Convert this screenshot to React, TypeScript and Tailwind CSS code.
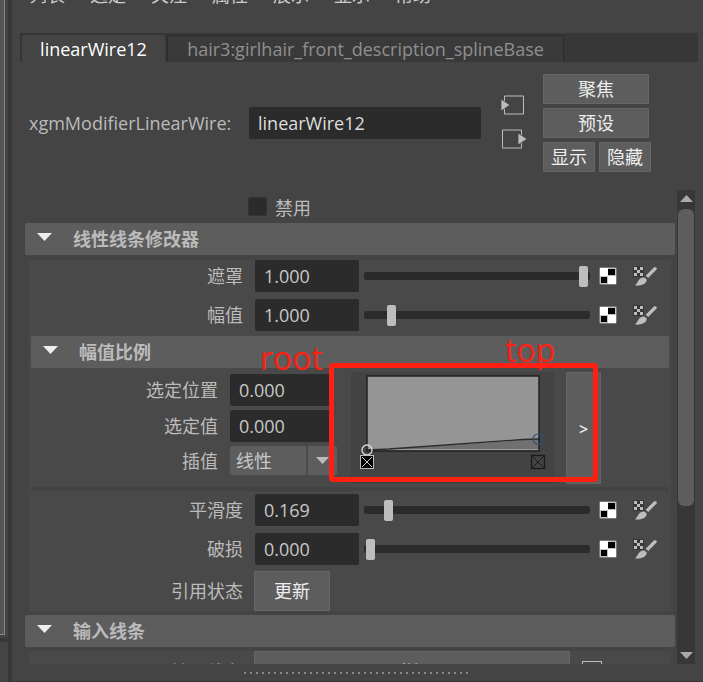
import React from "react";

function Triangle({ className }: { className: string }) {
  return (
    <svg viewBox="0 0 15 8" className={className} aria-hidden="true">
      <path d="M0 0H15L7.5 8Z" fill="currentColor" />
    </svg>
  );
}

function CheckerIcon() {
  return (
    <svg width="18" height="18" viewBox="0 0 18 18" aria-hidden="true">
      <rect width="18" height="18" rx="2" fill="#7d7d7d" />
      <rect x="1" y="1" width="16" height="16" rx="1" fill="#c4c4c4" />
      <path d="M1 1h8v8H1zM9 9h8v8H9z" fill="#fff" />
      <path d="M9 2h7v6H9zM2 10h6v6H2z" fill="#000" />
    </svg>
  );
}

function BrushIcon() {
  return (
    <svg width="25" height="20" viewBox="0 0 25 20" aria-hidden="true">
      <rect x="0" y="0" width="11" height="11" fill="#383838" />
      <path
        d="M1 1h3v3H1zM7 1h3v3H7zM4 4h3v3H4zM1 7h3v3H1zM7 7h3v3H7z"
        fill="#bdbdbd"
        shapeRendering="crispEdges"
      />
      <path
        d="M20.600 1.300C22.400 0 24.900 1.600 24 3.600L15.200 12.400 12.200 9.800ZM11.200 11L14.200 13.500C14.300 18.300 7 21.400 1 19.400 4.800 18 4.200 11.200 11.200 11Z"
        fill="#bdbdbd"
        stroke="#3a3a3a"
        strokeWidth="0.700"
      />
    </svg>
  );
}

function SectionHeader({ title }: { title: string }) {
  return (
    <button
      type="button"
      className="flex h-8 w-full items-center gap-[21px] rounded-xs bg-[#5d5d5d] pl-3 text-left font-bold text-[#bbbbbb]"
    >
      <Triangle className="mb-1 h-2 w-[15px] text-[#eeeeee]" />
      {title}
    </button>
  );
}

const fieldClass = "h-8 w-[104px] shrink-0 rounded-xs bg-[#2b2b2b] px-[9px] text-[#c8c8c8] outline-none";
const buttonClass =
  "flex items-center justify-center rounded-[1px] border border-[#666666] bg-[#5d5d5d] text-[#eeeeee]";

function SliderRow({ id, label, value, position }: { id: string; label: string; value: string; position: number }) {
  return (
    <div className="flex h-8 items-center pr-[13px]">
      <label htmlFor={id} className="w-[214px] shrink-0 text-right">
        {label}
      </label>
      <input id={id} defaultValue={value} className={"ml-3 " + fieldClass} />
      <input
        type="range"
        aria-label={label}
        min={0}
        max={217}
        defaultValue={position}
        className="ml-[5px] h-[21px] min-w-0 flex-1 appearance-none bg-transparent [&::-webkit-slider-runnable-track]:h-2 [&::-webkit-slider-runnable-track]:rounded-xs [&::-webkit-slider-runnable-track]:bg-[#2b2b2b] [&::-webkit-slider-thumb]:-mt-1.5 [&::-webkit-slider-thumb]:h-[21px] [&::-webkit-slider-thumb]:w-[9px] [&::-webkit-slider-thumb]:appearance-none [&::-webkit-slider-thumb]:rounded-xs [&::-webkit-slider-thumb]:bg-[#bdbdbd]"
      />
      <button type="button" aria-label="纹理" className="ml-[9px]">
        <CheckerIcon />
      </button>
      <button type="button" aria-label="绘制" className="ml-4">
        <BrushIcon />
      </button>
    </div>
  );
}

function Ramp() {
  return (
    <svg width="203" height="112" viewBox="0 0 203 112" className="bg-[#434343]" role="img" aria-label="幅值比例">
      <rect x="16" y="4" width="172" height="75" fill="#959595" />
      <path d="M16 78L38 77 188 67V79H16Z" fill="#707070" />
      <path d="M17 77.500H188" stroke="#999" />
      <path d="M16 78L38 77 172 67.500 188 67" stroke="#2c2c2c" strokeWidth="1.300" fill="none" />
      <rect x="16" y="4" width="172" height="75" fill="none" stroke="#222" strokeWidth="1.500" />
      <circle cx="16" cy="78" r="5" fill="none" stroke="#ddd" strokeWidth="1.300" />
      <circle cx="187" cy="67" r="5" fill="none" stroke="#2f4f70" strokeWidth="1.200" />
      <rect x="9.500" y="83.500" width="13" height="13" fill="#000" stroke="#bbb" />
      <path d="M11 85L21 95M21 85L11 95" stroke="#ccc" />
      <rect x="180.500" y="83.500" width="13" height="13" fill="none" stroke="#1a1a1a" strokeWidth="1.300" />
      <path d="M181 84L193 96M193 84L181 96" stroke="#1a1a1a" />
    </svg>
  );
}

function AttributeHeader() {
  return (
    <div className="flex h-[128px] shrink-0 items-start pt-3 pl-[17px]">
      <label htmlFor="node" className="mt-[33px] w-[220px] leading-8">
        xgmModifierLinearWire:
      </label>
      <input
        id="node"
        defaultValue="linearWire12"
        className="mt-[33px] h-8 w-[232px] rounded-xs bg-[#2b2b2b] px-[9px] text-[#dddddd] outline-none"
      />
      <div className="mt-[21px] ml-5 flex w-[26px] flex-col gap-3">
        <button type="button" aria-label="输入连接">
          <svg width="26" height="22" viewBox="0 0 26 22" aria-hidden="true">
            <path d="M3.500 1h19v18h-19z" fill="none" stroke="#bdbdbd" />
            <path d="M0 4v12l9-6z" fill="#bdbdbd" stroke="#444" strokeWidth="0.800" />
          </svg>
        </button>
        <button type="button" aria-label="输出连接">
          <svg width="26" height="22" viewBox="0 0 26 22" aria-hidden="true">
            <path d="M1.500 1h19v18h-19z" fill="none" stroke="#bdbdbd" />
            <path d="M17 4v12l9-6z" fill="#bdbdbd" stroke="#444" strokeWidth="0.800" />
          </svg>
        </button>
      </div>
      <div className="ml-4 flex w-[108px] flex-col gap-1">
        <button type="button" className={"h-[30px] w-[106px] " + buttonClass}>
          聚焦
        </button>
        <button type="button" className={"h-[30px] w-[106px] " + buttonClass}>
          预设
        </button>
        <div className="flex gap-1">
          <button type="button" className={"h-[30px] flex-1 " + buttonClass}>
            显示
          </button>
          <button type="button" className={"h-[30px] flex-1 " + buttonClass}>
            隐藏
          </button>
        </div>
      </div>
    </div>
  );
}

function ScaleSection() {
  return (
    <div className="relative mx-0.5 mt-[5px]">
      <SectionHeader title="幅值比例" />
      <div className="flex h-[119px] pt-1">
        <div className="flex w-[306px] shrink-0 flex-col gap-1 pt-0.5">
          <div className="flex items-center gap-3">
            <label htmlFor="pos" className="w-[187px] text-right">
              选定位置
            </label>
            <input id="pos" defaultValue="0.000" className={fieldClass} />
          </div>
          <div className="flex items-center gap-3">
            <label htmlFor="val" className="w-[187px] text-right">
              选定值
            </label>
            <input id="val" defaultValue="0.000" className={fieldClass} />
          </div>
          <div className="flex items-center gap-3">
            <label htmlFor="interp" className="w-[187px] text-right">
              插值
            </label>
            <div className="grid w-[107px] items-center">
              <select
                id="interp"
                className="col-start-1 row-start-1 h-[29px] appearance-none rounded-xs bg-[#5d5d5d] pl-1.5 text-[#c8c8c8] outline-none"
              >
                <option>线性</option>
              </select>
              <span className="pointer-events-none col-start-1 row-start-1 flex h-[29px] w-[31px] items-center justify-center justify-self-end border-l-2 border-[#4c4c4c]">
                <Triangle className="h-[7px] w-[13px] text-[#bbbbbb]" />
              </span>
            </div>
          </div>
        </div>
        <div className="relative ml-3.5 flex h-[112px] gap-3">
          <Ramp />
          <button type="button" className={"w-[35px] pt-0.5 text-base font-semibold " + buttonClass}>
            &gt;
          </button>
          <div className="pointer-events-none absolute -top-[9px] -left-[22px] h-[119px] w-[269px] rounded-sm border-5 border-[#fe2012]" />
        </div>
      </div>
      <div className="h-1 bg-[#424242]" />
      <span className="absolute top-0.5 left-[229px] text-[32px] leading-10 text-[#fe2012]">root</span>
      <span className="absolute -top-1.5 left-[474px] text-[32px] leading-10 text-[#fe2012]">top</span>
    </div>
  );
}

function ScrollBar() {
  return (
    <div className="ml-0.5 flex w-[18px] shrink-0 flex-col items-center bg-[#373737] py-[5px]">
      <Triangle className="h-[7px] w-[13px] rotate-180 text-[#aaaaaa]" />
      <div className="mt-[7px] h-[297px] w-4 rounded-md bg-[#5d5d5d]" />
      <Triangle className="mt-auto h-[7px] w-[13px] text-[#aaaaaa]" />
    </div>
  );
}

const menus = ["列表", "选定", "关注", "属性", "展示", "显示", "帮助"];

export default function App() {
  return (
    <div className="flex h-screen overflow-hidden bg-[#444444] font-['Open_Sans','Noto_Sans_CJK_SC',sans-serif] text-lg leading-6 text-[#bbbbbb]">
      <div className="flex w-2 shrink-0 flex-col">
        <div className="mr-[3px] h-[635px] border-r border-b border-[#888888] bg-[#555555]" />
        <div className="mt-[3px] h-1 bg-[#373737]" />
      </div>
      <div className="w-1 shrink-0 bg-[#373737]" />
      <main className="flex min-w-0 flex-1 flex-col">
        <nav className="flex h-[7px] shrink-0 items-end gap-[25px] overflow-hidden pl-[17px] text-[#cccccc]">
          {menus.map((m) => (
            <button type="button" key={m} className="shrink-0">
              {m}
            </button>
          ))}
        </nav>
        <div className="mt-[26px] mr-[5px] ml-2 flex h-[29px] shrink-0 gap-0.5 bg-[#373737] pt-0.5 pl-0.5" role="tablist">
          <button type="button" role="tab" aria-selected="true" className="w-[143px] rounded-t-xs bg-[#444444] text-white">
            linearWire12
          </button>
          <button
            type="button"
            role="tab"
            aria-selected="false"
            className="w-[397px] rounded-t-xs border-t border-r border-l border-[#2b2b2b] bg-[#3a3a3a] text-[#8f8f8f]"
          >
            hair3:girlhair_front_description_splineBase
          </button>
        </div>
        <AttributeHeader />
        <div className="mr-2 flex min-h-0 flex-1 pl-[13px]">
          <div className="min-w-0 flex-1 overflow-hidden pt-[7px]">
            <label className="flex h-[26px] items-start gap-2 pl-[223px]">
              <input
                type="checkbox"
                className="h-[19px] w-[19px] appearance-none rounded-xs border border-[#333333] bg-[#2b2b2b]"
              />
              <span className="leading-[22px]">禁用</span>
            </label>
            <SectionHeader title="线性线条修改器" />
            <div className="mx-1 mt-[5px] bg-[#494949]">
              <div className="flex flex-col gap-[7px]">
                <SliderRow id="mask" label="遮罩" value="1.000" position={215} />
                <SliderRow id="mag" label="幅值" value="1.000" position={23} />
              </div>
              <ScaleSection />
              <div className="mt-[3px] flex flex-col gap-[7px]">
                <SliderRow id="smooth" label="平滑度" value="0.169" position={20} />
                <SliderRow id="noise" label="破损" value="0.000" position={2} />
              </div>
              <div className="mt-1.5 flex h-10 items-center gap-[11px]">
                <span className="w-[214px] text-right">引用状态</span>
                <button type="button" className={"h-10 w-[76px] " + buttonClass}>
                  更新
                </button>
              </div>
            </div>
            <div className="mt-1">
              <SectionHeader title="输入线条" />
            </div>
            <div className="mx-1 mt-1 flex gap-[11px] bg-[#494949]">
              <span className="w-[214px] text-right leading-[42px]">输入线条</span>
              <button type="button" className={"h-[42px] w-[316px] " + buttonClass}>
                附加
              </button>
              <span className="mt-2.5 ml-px h-5 w-5 border border-[#bbbbbb]" />
            </div>
          </div>
          <ScrollBar />
        </div>
        <div className="flex h-[18px] shrink-0 items-center justify-center gap-1 border-b border-[#3a3438] pr-1">
          {Array.from({ length: 38 }, (_, i) => (
            <span key={i} className="size-0.5 bg-[#888888]" />
          ))}
        </div>
      </main>
    </div>
  );
}
